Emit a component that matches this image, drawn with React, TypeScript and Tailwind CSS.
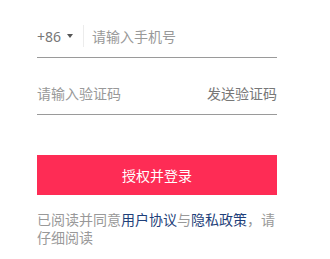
export default function App() {
  return (
    <div className="h-[259px] w-[330px] bg-white pt-[15px] font-['Noto_Sans','Noto_Sans_CJK_SC',sans-serif] text-[14px]">
      <div className="ml-[37px] w-[240px]">
        <div className="flex h-[43px] items-center border-b border-[#9a9a9a]">
          <span className="text-[#777]">+86</span>
          <svg className="ml-[6px]" width="6" height="4" viewBox="0 0 6 4">
            <path d="M0 0h6L3 4z" fill="#555" />
          </svg>
          <span className="ml-[10px] h-[22px] w-px bg-[#ececec]" />
          <input
            className="ml-[8px] min-w-0 flex-1 bg-transparent text-[#333] outline-none placeholder:text-[#999]"
            placeholder="请输入手机号"
          />
        </div>
        <div className="mt-[14px] flex h-[43px] items-center justify-between border-b border-[#9a9a9a]">
          <input
            className="min-w-0 flex-1 bg-transparent text-[#333] outline-none placeholder:text-[#999]"
            placeholder="请输入验证码"
          />
          <span className="text-[#777]">发送验证码</span>
        </div>
        <button className="mt-[40px] flex h-[40px] w-full items-center justify-center bg-[#fe2c55] text-[14px] text-white">
          授权并登录
        </button>
        <p className="mt-[16px] leading-[18px] text-[#999]">
          已阅读并同意<span className="text-[#1f3f7a]">用户协议</span>与<span className="text-[#1f3f7a]">隐私政策</span>，请仔细阅读
        </p>
      </div>
    </div>
  );
}
